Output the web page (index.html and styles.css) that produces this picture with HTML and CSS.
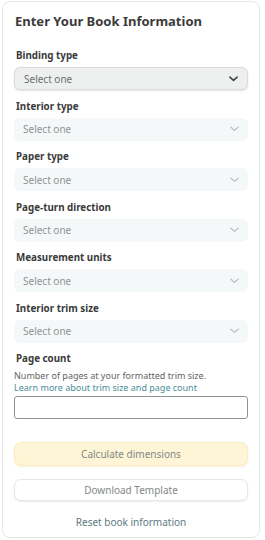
FILE: index.html
```html
<!DOCTYPE html>
<html>
<head>
<meta charset="utf-8">
<link rel="stylesheet" href="styles.css">
</head>
<body>
<div class="card">
  <h1 class="title">Enter Your Book Information</h1>
  <div class="fields">
    <div class="field">
      <div class="label">Binding type</div>
      <div class="select select-active"><span>Select one</span><svg class="chev" viewBox="0 0 10 6" width="9" height="6"><path d="M1 1l4 3.5L9 1" fill="none" stroke="#444" stroke-width="1.8" stroke-linecap="round" stroke-linejoin="round"/></svg></div>
    </div>
    <div class="field">
      <div class="label">Interior type</div>
      <div class="select"><span>Select one</span><svg class="chev" viewBox="0 0 10 6" width="9" height="6"><path d="M1 1l4 3.5L9 1" fill="none" stroke="#b5bcbc" stroke-width="1.3" stroke-linecap="round" stroke-linejoin="round"/></svg></div>
    </div>
    <div class="field">
      <div class="label">Paper type</div>
      <div class="select"><span>Select one</span><svg class="chev" viewBox="0 0 10 6" width="9" height="6"><path d="M1 1l4 3.5L9 1" fill="none" stroke="#b5bcbc" stroke-width="1.3" stroke-linecap="round" stroke-linejoin="round"/></svg></div>
    </div>
    <div class="field">
      <div class="label">Page-turn direction</div>
      <div class="select"><span>Select one</span><svg class="chev" viewBox="0 0 10 6" width="9" height="6"><path d="M1 1l4 3.5L9 1" fill="none" stroke="#b5bcbc" stroke-width="1.3" stroke-linecap="round" stroke-linejoin="round"/></svg></div>
    </div>
    <div class="field">
      <div class="label">Measurement units</div>
      <div class="select"><span>Select one</span><svg class="chev" viewBox="0 0 10 6" width="9" height="6"><path d="M1 1l4 3.5L9 1" fill="none" stroke="#b5bcbc" stroke-width="1.3" stroke-linecap="round" stroke-linejoin="round"/></svg></div>
    </div>
    <div class="field">
      <div class="label">Interior trim size</div>
      <div class="select"><span>Select one</span><svg class="chev" viewBox="0 0 10 6" width="9" height="6"><path d="M1 1l4 3.5L9 1" fill="none" stroke="#b5bcbc" stroke-width="1.3" stroke-linecap="round" stroke-linejoin="round"/></svg></div>
    </div>
    <div class="field">
      <div class="label">Page count</div>
      <div class="help">Number of pages at your formatted trim size.</div>
      <div class="help link">Learn more about trim size and page count</div>
      <div class="input"></div>
    </div>
  </div>
  <div class="btn btn-primary">Calculate dimensions</div>
  <div class="btn btn-secondary">Download Template</div>
  <div class="reset">Reset book information</div>
</div>
</body>
</html>
```
FILE: styles.css
```css
html, body {
  margin: 0;
  padding: 0;
  background: #ffffff;
}
body {
  font-family: "Noto Sans", "Open Sans", Arial, sans-serif;
  color: #333;
}
.card {
  box-sizing: border-box;
  margin: 1px 0 0 2px;
  width: 258px;
  height: 537px;
  border: 1px solid #e6e8e8;
  border-radius: 8px;
  padding: 9px 11px 0 11px;
}
.title {
  margin: 0;
  font-size: 13px;
  line-height: 20px;
  font-weight: 700;
  color: #3b3b3b;
  padding-left: 1px;
}
.fields {
  margin-top: 17px;
  display: flex;
  flex-direction: column;
  gap: 8.5px;
}
.field {
  display: flex;
  flex-direction: column;
}
.label {
  font-size: 9.8px;
  line-height: 15px;
  font-weight: 700;
  color: #3a3a3a;
  margin-bottom: 4px;
  padding-left: 2px;
}
.select {
  box-sizing: border-box;
  height: 23px;
  border-radius: 6px;
  background: #f5f8f8;
  display: flex;
  align-items: center;
  justify-content: space-between;
  padding: 0 9px 0 9px;
  font-size: 10px;
  color: #8f9595;
}
.select-active {
  background: #eef0f0;
  border: 1px solid #d8dcdc;
  box-shadow: 0 1px 2px rgba(0,0,0,0.12);
  color: #6b6f6f;
}
.chev {
  display: block;
}
.help {
  font-size: 9px;
  line-height: 12px;
  color: #5f6464;
}
.help.link {
  color: #4a8e98;
}
.input {
  box-sizing: border-box;
  margin-top: 2px;
  height: 23px;
  border: 1px solid #8f9393;
  border-radius: 3px;
  background: #fff;
}
.btn {
  box-sizing: border-box;
  display: flex;
  align-items: center;
  justify-content: center;
  font-size: 10px;
  color: #838888;
  border-radius: 7px;
}
.btn-primary {
  margin-top: 23px;
  height: 24px;
  background: #fdf5d6;
  border: 1px solid #f8ecc0;
  box-shadow: 0 1px 2px rgba(200,170,60,0.15);
}
.btn-secondary {
  margin-top: 13px;
  height: 22px;
  background: #ffffff;
  border: 1px solid #e6e8e8;
  box-shadow: 0 1px 2px rgba(0,0,0,0.08);
}
.reset {
  margin-top: 14px;
  text-align: center;
  font-size: 10px;
  line-height: 14px;
  color: #5b7a80;
}
```
